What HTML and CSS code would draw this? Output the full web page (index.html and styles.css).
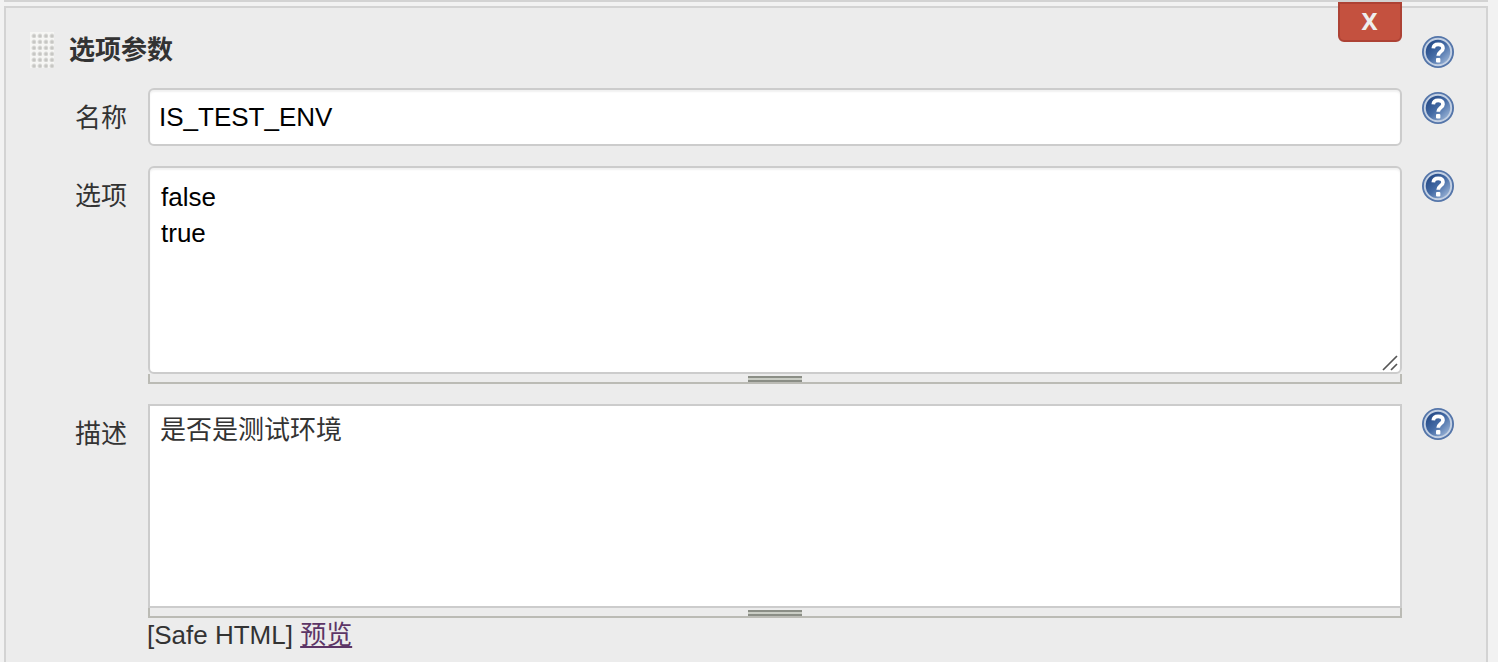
FILE: index.html
```html
<!DOCTYPE html>
<html lang="zh-CN">
<head>
    <meta charset="UTF-8">
    <meta name="viewport" content="width=device-width, initial-scale=1.0">
    <title>选项参数</title>
    <link rel="stylesheet" href="styles.css">
</head>
<body>
    <svg class="defs" width="0" height="0">
        <defs>
            <linearGradient id="helpFill" x1="0" y1="0" x2="1" y2="1">
                <stop offset="0.15" stop-color="#254a87"/>
                <stop offset="0.5" stop-color="#456ca6"/>
                <stop offset="0.9" stop-color="#9db6d8"/>
            </linearGradient>
            <symbol id="help" viewBox="0 0 32 32">
                <circle cx="16" cy="16" r="16" fill="#5475a9"/>
                <circle cx="16" cy="16" r="13.2" fill="url(#helpFill)" stroke="#c3d0e3" stroke-width="1.9"/>
                <path d="M11.3 12.4C11.5 9.6 13.5 8.4 16.2 8.4c2.9 0 4.8 1.3 4.8 3.8 0 3.3-4.8 3.8-4.8 7.6" fill="none" stroke="#fff" stroke-width="3.7"/>
                <rect x="14" y="22" width="4.4" height="4.4" rx="1" fill="#fff"/>
            </symbol>
        </defs>
    </svg>

    <div class="previous-chunk"></div>
    <div class="chunk">
        <div class="row header-row">
            <span class="drag-handle"></span>
            <b class="title">选项参数</b>
            <button type="button" class="delete-btn">X</button>
            <svg class="help-icon"><use href="#help"/></svg>
        </div>

        <div class="row">
            <label class="name" for="name">名称</label>
            <input class="setting-input" type="text" id="name" value="IS_TEST_ENV">
            <svg class="help-icon"><use href="#help"/></svg>
        </div>

        <div class="row">
            <label class="name" for="choices">选项</label>
            <div class="field">
                <textarea class="setting-input choices" id="choices">false
true</textarea>
                <svg class="resizer" viewBox="0 0 16 16">
                    <path d="M1 15L15 1M9 15L15 9" fill="none" stroke="#555" stroke-width="1.7"/>
                </svg>
                <div class="textarea-handle"><span></span></div>
            </div>
            <svg class="help-icon"><use href="#help"/></svg>
        </div>

        <div class="row">
            <label class="name" for="description">描述</label>
            <div class="field">
                <textarea class="setting-input description" id="description">是否是测试环境</textarea>
                <div class="textarea-handle"><span></span></div>
                <div class="preview">[Safe HTML] <a href="#">预览</a></div>
            </div>
            <svg class="help-icon"><use href="#help"/></svg>
        </div>
    </div>
</body>
</html>
```

FILE: styles.css
```css
* {
    box-sizing: border-box;
}
body {
    margin: 0;
    padding: 0 10px 0 4px;
    height: 662px;
    overflow: hidden;
    background: #f2f2f2;
    color: #333;
    font-family: "Liberation Sans", "Noto Sans CJK SC", sans-serif;
    font-size: 26px;
}
.defs {
    display: block;
}
.previous-chunk {
    height: 2px;
    margin-bottom: 4px;
    background: #d3d3d3;
}
.chunk {
    height: 680px;
    border: 2px solid #d3d3d3;
    background: #ececec;
}
.row {
    display: grid;
    grid-template-columns: 142px 1254px 32px;
    align-items: start;
    margin-bottom: 20px;
}
.header-row {
    display: flex;
    position: relative;
    height: 80px;
    margin-bottom: 0;
    padding: 24px 32px 0 24px;
}
.header-row .help-icon {
    margin: 4px 0 0 auto;
}
.drag-handle {
    width: 24px;
    height: 36px;
    background: radial-gradient(circle at 4px 4px, #bdbdb9 0, #d2d2cf 1.5px, #f6f6f4 3px) 0 0 / 6px 6px;
}
.title {
    margin-left: 15px;
    line-height: 36px;
}
.delete-btn {
    position: absolute;
    top: -6px;
    right: 84px;
    width: 64px;
    height: 40px;
    padding: 0 1px 2px 0;
    border: 2px solid #ad4235;
    border-radius: 0 0 6px 6px;
    background: #c4513f;
    color: #eee;
    font: bold 24px/34px "Noto Sans", sans-serif;
}
.name {
    padding: 12px 21px 0 0;
    text-align: right;
    line-height: 36px;
}
.setting-input {
    display: block;
    width: 100%;
    height: 58px;
    margin: 0;
    padding: 0 9px;
    border: 2px solid #ccc;
    border-radius: 6px;
    outline: none;
    resize: none;
    background: #fff;
    box-shadow: inset 0 2px 2px rgba(0,0,0,0.06);
    color: #000;
    font: inherit;
}
.field {
    position: relative;
}
.choices {
    height: 208px;
    padding: 11px;
    line-height: 36px;
}
.description {
    height: 204px;
    padding: 6px 10px;
    border-radius: 0;
    box-shadow: none;
    color: #333;
    line-height: 36px;
}
.resizer {
    position: absolute;
    top: 189px;
    right: 4px;
    width: 16px;
    height: 16px;
}
.textarea-handle {
    display: flex;
    justify-content: center;
    height: 10px;
    border: 2px solid #bbbbb5;
    border-top: none;
}
.textarea-handle span {
    width: 54px;
    height: 6px;
    margin-top: 2px;
    border: solid #8b8e86;
    border-width: 2px 0;
    background: #cacdc5;
}
.preview {
    margin-left: -1px;
    line-height: 34px;
}
.preview a {
    color: #5c3566;
}
.help-icon {
    width: 32px;
    height: 32px;
    margin: 4px 0 0 20px;
}
```
